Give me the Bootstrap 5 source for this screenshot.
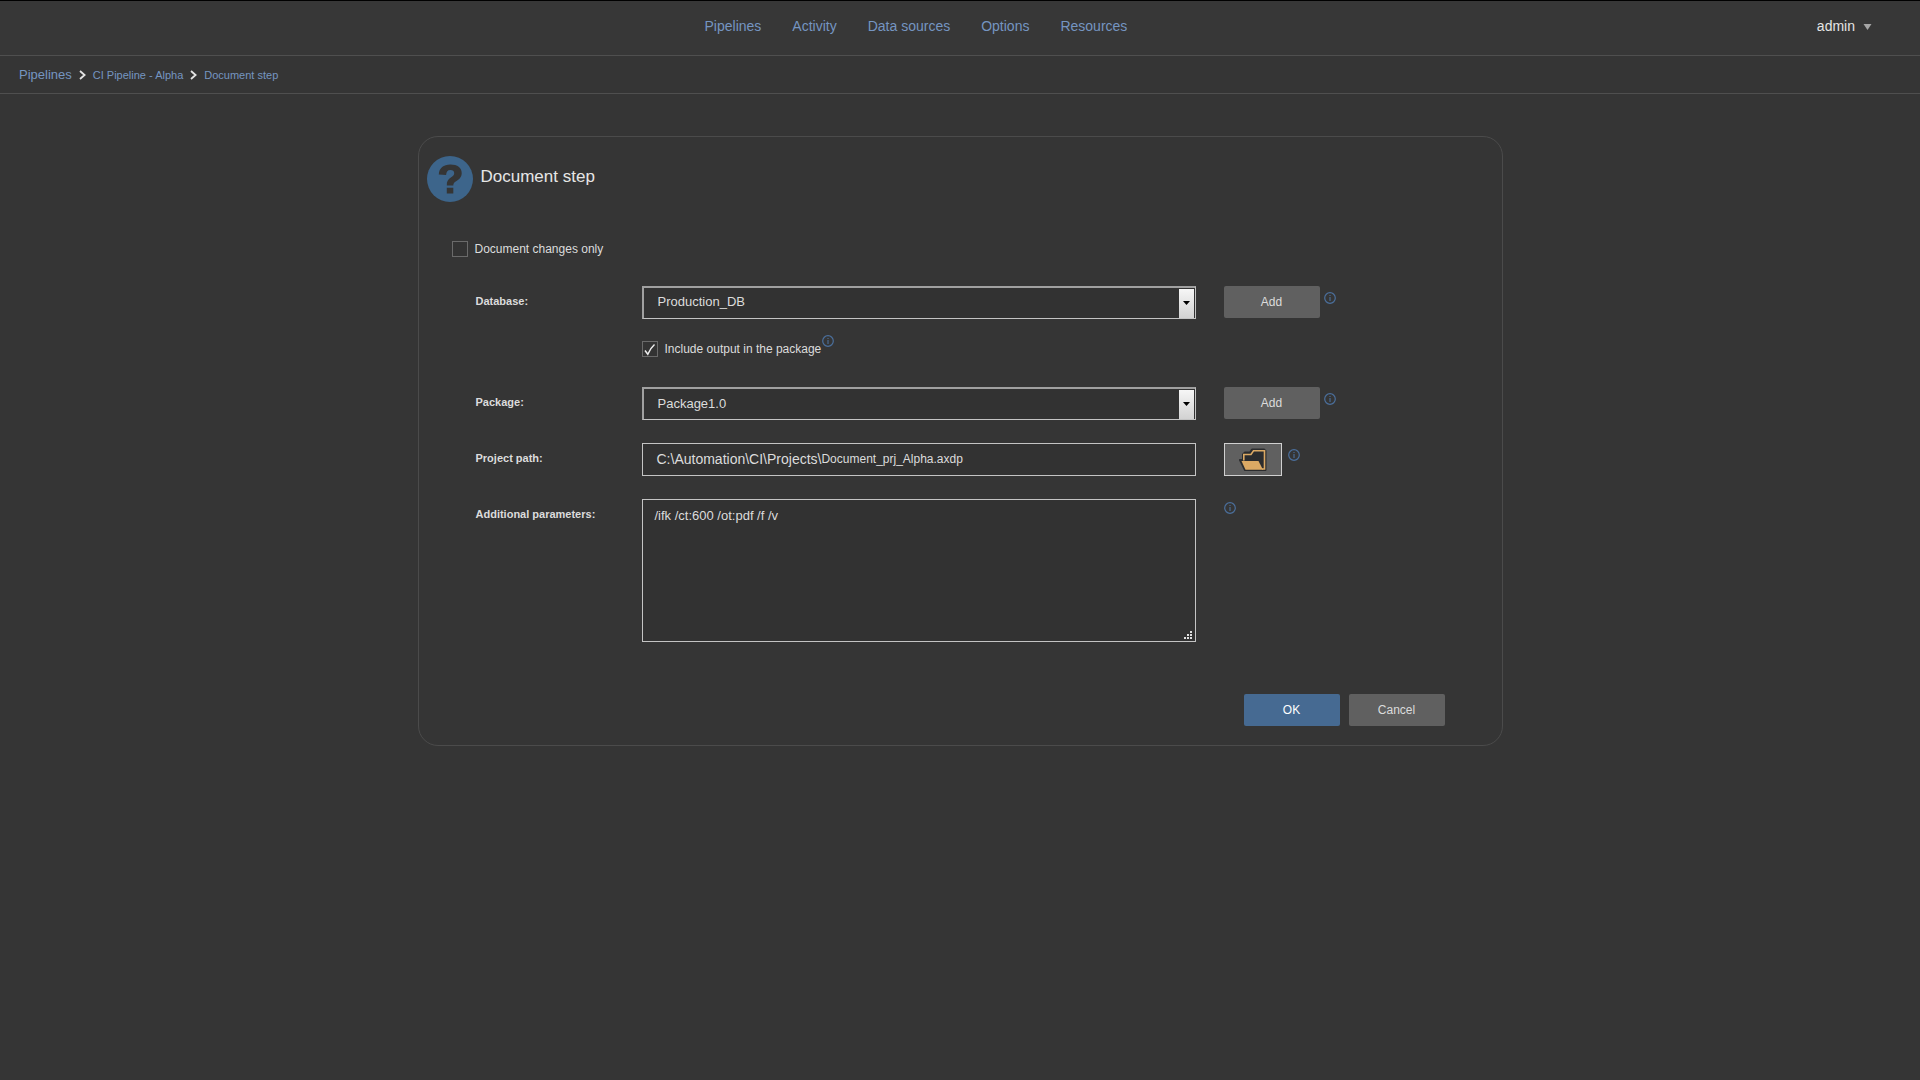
<!DOCTYPE html>
<html lang="en">
<head>
<meta charset="utf-8">
<meta name="viewport" content="width=device-width, initial-scale=1">
<title>Document step</title>
<link rel="stylesheet" href="https://cdn.jsdelivr.net/npm/bootstrap@5.3.0/dist/css/bootstrap.min.css">
<style>
  body { background: #353535; color: #dcdcdc; font-family: "Liberation Sans", Arial, sans-serif; font-size: 12px; line-height: 16px; }
  a { color: #7595c1; text-decoration: none; }
  .top-bar { height: 56px; padding: 0 48px 4px 15px; border-top: 1px solid #000; border-bottom: 1px solid #4f4f4f; background: #373737; font-size: 14px; }
  .main-links { gap: 31px; }
  .main-links .nav-link { padding: 0; color: #7595c1; }
  .user-menu { padding: 0; border: 0; background: none; color: #e4e4e4; font-size: 14px; gap: 8px; }
  .crumb-bar { height: 38px; padding: 0 19px; border-bottom: 1px solid #4f4f4f; font-size: 11px; gap: 7px; }
  .crumb-bar .crumb-root { font-size: 13px; }
  .step-panel { max-width: 1085px; margin: 42px auto; padding: 19px 57px 19px 8px; border: 1px solid #4b4b4b; border-radius: 20px; }
  .step-title { font-size: 17px; line-height: 20px; margin: 0 0 4px; font-weight: 400; color: #e6e6e6; }
  .step-form { padding-left: 49px; }
  .tick { appearance: none; width: 16px; height: 16px; margin: 0; border: 1px solid #6a6a6a; background: #333 center / 14px 14px no-repeat; flex: none; }
  .tick:checked { background-image: url("data:image/svg+xml,%3Csvg xmlns='http://www.w3.org/2000/svg' viewBox='0 0 14 14'%3E%3Cpath d='M2 8.5L4.8 12.3Q7.5 6 11.5 2.5' fill='none' stroke='%23eee' stroke-width='1.5'/%3E%3C/svg%3E"); }
  .first-check { margin: 39px 0 29px -24px; gap: 7px; }
  .include-row { margin: 22px 0 30px 166px; gap: 7px; }
  .include-row .info { margin: -6px 0 0 -6px; align-self: flex-start; }
  .path-row { margin: 23px 0; }
  .field-label { width: 166px; flex: none; padding-top: 7px; font-size: 11px; font-weight: 700; }
  .field-side { width: 221px; flex: none; margin-left: 28px; }
  .box { width: 100%; height: 33px; border: 1px solid #c4c4c4; border-radius: 0; background-color: #323232; color: #dcdcdc; font-size: 13px; outline: 0; }
  select.box { appearance: none; padding: 0 24px 2px 14px; border-top: 2px solid #a0a0a0; border-left: 2px solid #a0a0a0;
    background-image: url("data:image/svg+xml,%3Csvg xmlns='http://www.w3.org/2000/svg' viewBox='0 0 7 4'%3E%3Cpath d='M0 0h7L3.5 4z'/%3E%3C/svg%3E"), linear-gradient(#f6f6f6, #d2d2d2);
    background-size: 7px 4px, 15px 29px; background-position: right 5px center, right 1px center; background-repeat: no-repeat; }
  select.package-box { padding-bottom: 0; }
  .path-box { padding: 0 0 2px 14px; }
  .path-root { font-size: 14px; }
  .path-file { padding: 0; border: 0; background: none; color: inherit; font-size: 12px; outline: 0; min-width: 0; }
  textarea.box { display: block; height: 143px; padding: 8px 12px; line-height: 16px; resize: none; }
  .grip { right: 4px; bottom: 3px; }
  .flat-btn { width: 96px; height: 32px; padding: 0; border: 0; border-radius: 2px; background: #606060; color: #dcdcdc; font-size: 12px; }
  .flat-btn:hover { background: #6c6c6c; color: #fff; }
  .flat-btn.ok-btn { background: #466a92; color: #fff; }
  .browse-btn { width: 58px; height: 33px; padding: 0; border: 1px solid #d0d0d0; border-radius: 0; background: #606060; margin-right: 2px; }
  .info { padding: 0; border: 0; background: none; line-height: 0; }
  .side-info { margin-top: 6px; }
  .form-actions { gap: 9px; margin-top: 52px; }
</style>
</head>
<body>
<svg class="d-none" aria-hidden="true">
  <symbol id="info-icon" viewBox="0 0 12 12"><circle cx="6" cy="6" r="5.3" fill="none" stroke="#4b6f9c" stroke-width="1.2"/><path d="M6 5v4M6 3v1.1" stroke="#4b6f9c" stroke-width="1.1"/></symbol>
  <symbol id="chevron-icon" viewBox="0 0 7 10"><path d="M1 1l4.6 4L1 9" fill="none" stroke="#e4e4e4" stroke-width="1.8"/></symbol>
</svg>

<header class="top-bar d-flex align-items-center">
  <nav class="main-links nav flex-grow-1 justify-content-center" aria-label="Main">
    <a class="nav-link" href="#">Pipelines</a>
    <a class="nav-link" href="#">Activity</a>
    <a class="nav-link" href="#">Data sources</a>
    <a class="nav-link" href="#">Options</a>
    <a class="nav-link" href="#">Resources</a>
  </nav>
  <button class="user-menu d-flex align-items-center" type="button">admin
    <svg width="9" height="7" viewBox="0 0 9 7"><path d="M.5 1h8L4.500 7z" fill="#a6a6a6"/></svg>
  </button>
</header>

<nav class="crumb-bar d-flex align-items-center" aria-label="Breadcrumb">
  <a class="crumb-root" href="#">Pipelines</a>
  <svg width="7" height="10"><use href="#chevron-icon"/></svg>
  <a href="#">CI Pipeline - Alpha</a>
  <svg width="7" height="10"><use href="#chevron-icon"/></svg>
  <a href="#">Document step</a>
</nav>

<main class="step-panel">
  <div class="d-flex align-items-center gap-2">
    <svg width="46" height="46" viewBox="0 0 46 46"><circle cx="23" cy="23" r="23" fill="#3d658b"/><path d="M11.800 18.500C12.200 12 16.500 8.600 23.400 8.600C30.500 8.600 34.700 12 34.700 17C34.700 21 32.500 23.200 29.500 25C27 26.500 26.300 27.500 26.300 29.500H19.800C19.600 25.500 21 23.500 23.800 21.600C26 20.100 27.200 19 27.200 17.200C27.200 15.200 25.800 14 23.400 14C20.600 14 19.400 15.600 19.100 18.900zM19.800 31.800h6.500v5.700h-6.500z" fill="#353535"/></svg>
    <h1 class="step-title">Document step</h1>
  </div>

  <form class="step-form">
    <div class="first-check d-flex align-items-center">
      <input class="tick" type="checkbox" id="changes-only">
      <label for="changes-only">Document changes only</label>
    </div>

    <div class="d-flex">
      <label class="field-label" for="database">Database:</label>
      <div class="flex-grow-1">
        <select class="box" id="database"><option>Production_DB</option></select>
      </div>
      <div class="field-side d-flex align-items-start gap-1">
        <button class="flat-btn btn" type="button">Add</button>
        <button class="info side-info" type="button" aria-label="About databases"><svg width="12" height="12"><use href="#info-icon"/></svg></button>
      </div>
    </div>

    <div class="include-row d-flex">
      <input class="tick" type="checkbox" id="include-output" checked>
      <label for="include-output">Include output in the package</label>
      <button class="info" type="button" aria-label="About including output"><svg width="12" height="12"><use href="#info-icon"/></svg></button>
    </div>

    <div class="d-flex">
      <label class="field-label" for="package">Package:</label>
      <div class="flex-grow-1">
        <select class="box package-box" id="package"><option>Package1.0</option></select>
      </div>
      <div class="field-side d-flex align-items-start gap-1">
        <button class="flat-btn btn" type="button">Add</button>
        <button class="info side-info" type="button" aria-label="About packages"><svg width="12" height="12"><use href="#info-icon"/></svg></button>
      </div>
    </div>

    <div class="path-row d-flex">
      <label class="field-label" for="project-path">Project path:</label>
      <div class="box path-box d-flex align-items-center flex-grow-1 w-auto">
        <span class="path-root">C:\Automation\CI\Projects\</span>
        <input class="path-file flex-grow-1" type="text" id="project-path" value="Document_prj_Alpha.axdp">
      </div>
      <div class="field-side d-flex align-items-start gap-1">
        <button class="browse-btn" type="button" aria-label="Browse">
          <svg width="28" height="24" viewBox="0 0 28 24"><path d="M4 12V6.500L6 4.500H11L13 1.500H25L26.500 3V22H6L1 12z" fill="#2b2c2e" stroke="#2b2c2e" stroke-width="2" stroke-linejoin="round"/><path d="M4.800 12.500V6.500H12L14.500 2.800H25.500V21H23" fill="none" stroke="#dba964" stroke-width="1.600"/><path d="M2.500 13H19.500L24 21.800H6.500z" fill="#dba964"/></svg>
        </button>
        <button class="info side-info" type="button" aria-label="About the project path"><svg width="12" height="12"><use href="#info-icon"/></svg></button>
      </div>
    </div>

    <div class="d-flex">
      <label class="field-label" for="parameters">Additional parameters:</label>
      <div class="flex-grow-1 position-relative">
        <textarea class="box" id="parameters">/ifk /ct:600 /ot:pdf /f /v</textarea>
        <svg class="grip position-absolute" width="8" height="8" viewBox="0 0 8 8"><path d="M6 0h2v2H6zM3 3h2v2H3zM6 3h2v2H6zM0 6h2v2H0zM3 6h2v2H3zM6 6h2v2H6z" fill="#e0e0e0"/></svg>
      </div>
      <div class="field-side">
        <button class="info" type="button" aria-label="About additional parameters"><svg width="12" height="12"><use href="#info-icon"/></svg></button>
      </div>
    </div>

    <div class="form-actions d-flex justify-content-end">
      <button class="flat-btn ok-btn btn" type="submit">OK</button>
      <button class="flat-btn btn" type="button">Cancel</button>
    </div>
  </form>
</main>
<script src="https://cdn.jsdelivr.net/npm/bootstrap@5.3.0/dist/js/bootstrap.bundle.min.js"></script>
</body>
</html>
